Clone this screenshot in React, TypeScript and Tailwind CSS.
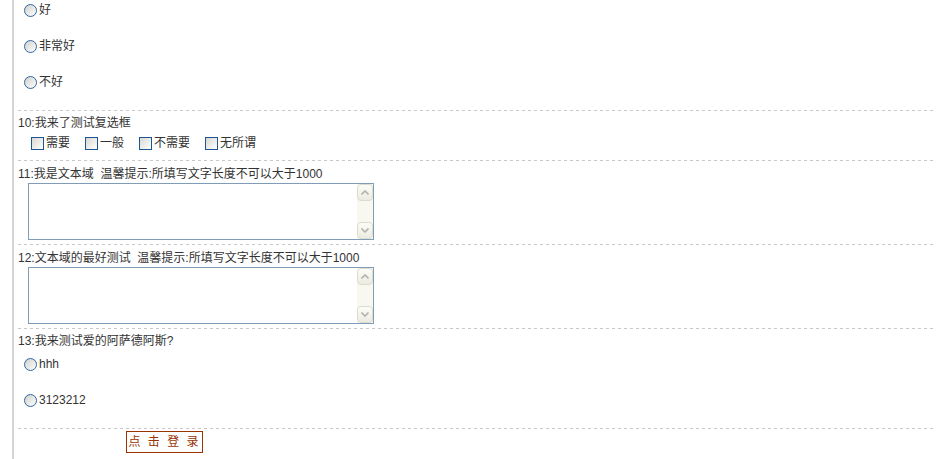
const Dashed = () => (
  <div className="h-px w-full bg-[linear-gradient(to_right,#c8c8c8_3px,transparent_3px)] bg-[length:6px_1px]" />
);

const Radio = ({ label }: { label: string }) => (
  <div className="flex h-[20px] items-center pl-[6px]">
    <span className="box-border block h-[13px] w-[13px] shrink-0 rounded-full border-[1.5px] border-solid border-[#2f66a3] bg-linear-to-br from-[#d0d0ca] to-white" />
    <span className="ml-[2px]">{label}</span>
  </div>
);

const Check = ({ label }: { label: string }) => (
  <div className="mr-[15px] flex items-center">
    <span className="box-border block h-[13px] w-[13px] shrink-0 border border-solid border-[#1c5596] bg-linear-to-br from-[#d8d8d2] to-white" />
    <span className="ml-[2px]">{label}</span>
  </div>
);

const Chevron = ({ up }: { up?: boolean }) => (
  <svg width="8" height="5" viewBox="0 0 8 5">
    <polyline
      points={up ? "0.5,4.5 4,1 7.5,4.5" : "0.5,0.5 4,4 7.5,0.5"}
      fill="none"
      stroke="#b4b4ac"
      strokeWidth="1.6"
    />
  </svg>
);

const TextBox = () => (
  <div className="ml-[10px] flex h-[57px] w-[346px] border border-[#7f9db9] bg-white">
    <textarea className="flex-1 resize-none border-none bg-white outline-none" />
    <div className="flex w-[16px] flex-col justify-between bg-[#f8f8f0]">
      <div className="flex h-[17px] items-center justify-center rounded-sm border border-[#dcdccc] bg-linear-to-b from-[#fdfdf8] to-[#ecebe2]">
        <Chevron up />
      </div>
      <div className="flex h-[17px] items-center justify-center rounded-sm border border-[#dcdccc] bg-linear-to-b from-[#fdfdf8] to-[#ecebe2]">
        <Chevron />
      </div>
    </div>
  </div>
);

export default function App() {
  return (
    <div className="h-[459px] w-full overflow-hidden bg-white font-['Liberation_Sans','Noto_Sans_CJK_SC',sans-serif] text-[12px] leading-[18px] text-[#333]">
      <div className="ml-[12px] h-full border-l-2 border-[#d4d4d4] pl-[4px] pr-[2px]">
        {/* question 9 options */}
        <div className="flex flex-col gap-[16px] pb-[18px]">
          <Radio label="好" />
          <Radio label="非常好" />
          <Radio label="不好" />
        </div>
        <Dashed />

        <div className="pt-[3px] pb-[8px]">
          <div className="h-[18px]">10:我来了测试复选框</div>
          <div className="mt-[2px] flex h-[18px] items-center pl-[13px]">
            <Check label="需要" />
            <Check label="一般" />
            <Check label="不需要" />
            <Check label="无所谓" />
          </div>
        </div>
        <Dashed />

        <div className="pt-[4px] pb-[4px]">
          <div className="h-[18px]">11:我是文本域&nbsp; 温馨提示:所填写文字长度不可以大于1000</div>
          <TextBox />
        </div>
        <Dashed />

        <div className="pt-[4px] pb-[4px]">
          <div className="h-[18px]">12:文本域的最好测试&nbsp; 温馨提示:所填写文字长度不可以大于1000</div>
          <TextBox />
        </div>
        <Dashed />

        <div className="pt-[3px] pb-[18px]">
          <div className="h-[18px]">13:我来测试爱的阿萨德阿斯?</div>
          <div className="mt-[4px]">
            <Radio label="hhh" />
          </div>
          <div className="mt-[16px]">
            <Radio label="3123212" />
          </div>
        </div>
        <Dashed />

        <div className="pt-[2px] pl-[108px]">
          <button className="h-[22px] w-[77px] whitespace-nowrap border border-[#9a3300] bg-white text-[12px] leading-[20px] tracking-[2px] text-[#9a3300]">
            点 击 登 录
          </button>
        </div>
      </div>
    </div>
  );
}
